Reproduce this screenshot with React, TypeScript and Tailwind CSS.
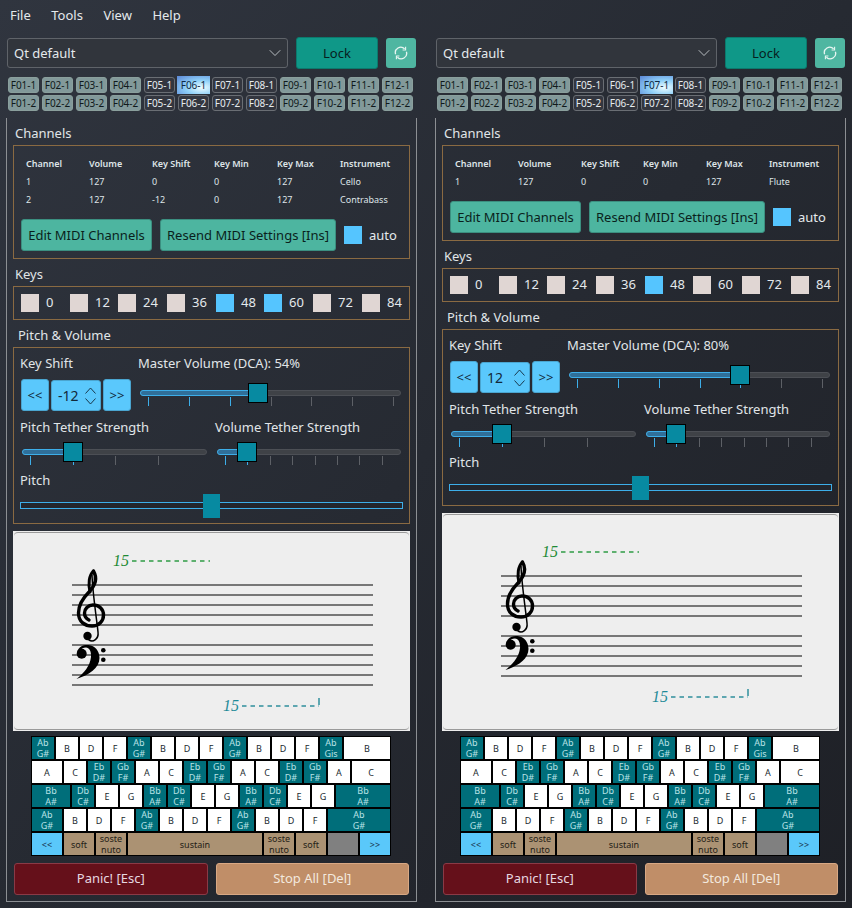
import { ChevronDown } from "lucide-react";

type Tick = { x: number; on: boolean };

type PaneProps = {
  selectedFn: number;
  channels: string[][];
  keysOn: number[];
  shift: string;
  volume: number;
  masterHandle: number;
  pitchHandle: number;
};

const ACCENT_KEY = "bg-[#006e7a] text-[#b8e2e6]";
const WHITE_KEY = "bg-white text-[#1b2a30]";
const PEDAL_KEY = "bg-[#ab9273] text-[#241d16]";
const BLUE_KEY = "bg-[#5ac8fa] text-[#17324a]";

const ab = "Ab\nG#";
const bb = "Bb\nA#";
const db = "Db\nC#";
const eb = "Eb\nD#";
const gb = "Gb\nF#";

// [label, width, colour]
type KeyDef = [string, string, string];

const k = (label: string, width = "w-[24px]"): KeyDef => [
  label,
  width,
  label.includes("\n") ? ACCENT_KEY : WHITE_KEY,
];

const KEY_ROWS: KeyDef[][] = [
  [
    k(ab), k("B"), k("D"), k("F"), k(ab), k("B"), k("D"), k("F"), k(ab), k("B"), k("D"), k("F"),
    k("Ab\nGis"), k("B", "w-[48px]"),
  ],
  [
    k("A", "w-[32px]"), k("C"), k(eb), k(gb), k("A"), k("C"), k(eb), k(gb), k("A"), k("C"), k(eb), k(gb),
    k("A"), k("C", "w-[40px]"),
  ],
  [
    k(bb, "w-[40px]"), k(db), k("E"), k("G"), k(bb), k(db), k("E"), k("G"), k(bb), k(db), k("E"), k("G"),
    k(bb, "w-[56px]"),
  ],
  [
    k(ab, "w-[32px]"), k("B"), k("D"), k("F"), k(ab), k("B"), k("D"), k("F"), k(ab), k("B"), k("D"), k("F"),
    k(ab, "w-[64px]"),
  ],
  [
    ["<<", "w-[32px]", BLUE_KEY],
    ["soft", "w-[32px]", PEDAL_KEY],
    ["soste\nnuto", "w-[32px]", PEDAL_KEY],
    ["sustain", "w-[136px]", PEDAL_KEY],
    ["soste\nnuto", "w-[32px]", PEDAL_KEY],
    ["soft", "w-[32px]", PEDAL_KEY],
    ["", "w-[32px]", "bg-[#808080]"],
    [">>", "w-[32px]", BLUE_KEY],
  ],
];

const COLUMNS = ["Channel", "Volume", "Key Shift", "Key Min", "Key Max", "Instrument"];
const OCTAVES = ["0", "12", "24", "36", "48", "60", "72", "84"];
const FN_COLS = ["01", "02", "03", "04", "05", "06", "07", "08", "09", "10", "11", "12"];

const SyncIcon = () => (
  <svg width="14" height="14" viewBox="0 0 14 14" fill="none" stroke="#e8f6f2" strokeWidth="1.3">
    <path d="M1.6 8.2A5.4 5.4 0 0 1 10.6 2.8" />
    <path d="M12.4 5.8A5.4 5.4 0 0 1 3.4 11.2" />
    <path d="M11.6 0.8V4H8.6" strokeWidth="1.1" />
    <path d="M2.4 13.2V10H5.4" strokeWidth="1.1" />
  </svg>
);

const SpinArrows = () => (
  <svg width="11" height="18" viewBox="0 0 11 18" fill="none" stroke="#12293a" strokeWidth="0.9">
    <path d="M0.500 6.500L5.500 1L10.500 6.500" />
    <path d="M0.500 11.500L5.500 17L10.500 11.500" />
  </svg>
);

const FnButton = ({ label, selected, dark }: { label: string; selected: boolean; dark: boolean }) => {
  if (selected) {
    return (
      <div className="w-[33px] h-[18px] -mx-px -my-px flex items-center justify-center text-[10px] text-[#102a44] bg-[radial-gradient(ellipse_at_75%_65%,#effdff_0%,#8fd0f8_45%,#5a86d6_100%)]">
        {label}
      </div>
    );
  }
  return (
    <div
      className={
        dark
          ? "w-[31px] h-[16px] rounded-[3px] border border-[#6a6e74] bg-[#33363f] flex items-center justify-center text-[10px] text-[#e6ebee]"
          : "w-[31px] h-[16px] rounded-[3px] border border-[#8a9f9c] bg-[#82999a] flex items-center justify-center text-[10px] text-[#10191b]"
      }
    >
      {label}
    </div>
  );
};

const FnRows = ({ selected }: { selected: number }) => (
  <div className="ml-[2px] mt-[8px] flex flex-col gap-[2px]">
    {["1", "2"].map((row) => (
      <div key={row} className="flex gap-[3px]">
        {FN_COLS.map((col, i) => (
          <FnButton
            key={col}
            label={`F${col}-${row}`}
            selected={row === "1" && i === selected}
            dark={i >= 4 && i <= 7}
          />
        ))}
      </div>
    ))}
  </div>
);

const ThemeRow = () => (
  <div className="ml-px flex items-center h-[32px]">
    <div className="w-[281px] h-[30px] rounded-[3px] border border-[#5f6369] bg-[#31353c] flex items-center justify-between pl-[6px] pr-[2px] text-[13px] text-[#e4e9ec]">
      <span className="pt-px">Qt default</span>
      <ChevronDown size={20} strokeWidth={0.9} />
    </div>
    <div className="ml-[8px] w-[82px] h-[32px] pt-px rounded-[3px] border border-[#0b7a6d] bg-[#0f9888] flex items-center justify-center text-[13px] text-[#07201d]">
      Lock
    </div>
    <div className="ml-[8px] w-[30px] h-[30px] rounded-[3px] bg-[#4fb6a1] flex items-center justify-center">
      <SyncIcon />
    </div>
  </div>
);

const Channels = ({ rows }: { rows: string[][] }) => (
  <div className="border border-[#8a6a42] pl-[7px] pr-[7px] pt-[9px] pb-[7px]">
    <div className="grid grid-cols-[63px_63px_62px_63px_63px_auto] pl-[5px] text-[9px] text-[#dfe5e8]">
      {COLUMNS.map((c) => (
        <div key={c} className="h-[18px] flex items-center font-semibold">
          {c}
        </div>
      ))}
      {rows.flat().map((c, i) => (
        <div key={i} className="h-[18px] flex items-center">
          {c}
        </div>
      ))}
    </div>
    <div className="mt-[10px] flex items-center text-[13px]">
      <div className="w-[131px] h-[32px] pt-px rounded-[3px] border border-[#3b8f80] bg-[#4db5a0] flex items-center justify-center text-[#0a1f1c]">
        Edit MIDI Channels
      </div>
      <div className="ml-[8px] w-[176px] h-[32px] pt-px rounded-[3px] border border-[#3b8f80] bg-[#4db5a0] flex items-center justify-center text-[#0a1f1c]">
        Resend MIDI Settings [Ins]
      </div>
      <div className="ml-[8px] size-[18px] bg-[#55c5ff]" />
      <span className="ml-[7px] pt-px text-[#e4e9ec]">auto</span>
    </div>
  </div>
);

const Keys = ({ on }: { on: number[] }) => (
  <div className="border border-[#8a6a42] h-[34px] pl-[7px] grid grid-cols-[49px_48px_49px_49px_48px_49px_49px_auto] items-center text-[13px] text-[#e4e9ec]">
    {OCTAVES.map((o, i) => (
      <div key={o} className="flex items-center gap-[7px]">
        <div className={on.includes(i) ? "size-[18px] bg-[#55c5ff]" : "size-[18px] bg-[#e0d6d3]"} />
        <span>{o}</span>
      </div>
    ))}
  </div>
);

const Slider = ({
  width,
  handle,
  ticks,
}: {
  width: string;
  handle: number;
  ticks: number[];
}) => {
  const marks: Tick[] = ticks.map((x) => ({ x, on: x <= handle + 10 }));
  return (
    <div className={`relative h-[23px] ${width}`}>
      <div className="absolute inset-x-0 top-[7px] h-[6px] rounded-full bg-[#3f4247] border border-[#4c4f55]" />
      <div
        className="absolute left-0 top-[7px] h-[6px] rounded-l-full bg-[#306f99] border border-[#3daee9]"
        style={{ width: handle + 2 }}
      />
      {marks.map((t) => (
        <div
          key={t.x}
          className={t.on ? "absolute top-[14px] h-[9px] w-px bg-[#3daee9]" : "absolute top-[14px] h-[9px] w-px bg-[#5d6066]"}
          style={{ left: t.x }}
        />
      ))}
      <div
        className="absolute top-0 size-[20px] bg-[#078aa1] border border-black"
        style={{ left: handle }}
      />
    </div>
  );
};

const SpinButton = ({ label }: { label: string }) => (
  <div className="w-[28px] h-[32px] rounded-[3px] border border-[#4aa5d0] bg-[#5ac8fc] flex items-center justify-center text-[13px] text-[#12293a]">
    {label}
  </div>
);

const PitchVolume = ({
  shift,
  volume,
  masterHandle,
  pitchHandle,
}: {
  shift: string;
  volume: number;
  masterHandle: number;
  pitchHandle: number;
}) => (
  <div className="border border-[#8a6a42] h-[177px] pl-[6px] pt-[6px] text-[13px] leading-[19px] text-[#e0e5e8]">
    <div className="flex">
      <div className="w-[118px]">
        <div>Key Shift</div>
        <div className="mt-[6px] ml-px flex gap-[2px]">
          <SpinButton label="<<" />
          <div className="w-[50px] h-[31px] mt-px rounded-[3px] border border-[#4aa5d0] bg-[#5ac8fc] flex items-center justify-between pl-[6px] pr-[4px] text-sm text-[#12293a]">
            <span>{shift}</span>
            <SpinArrows />
          </div>
          <SpinButton label=">>" />
        </div>
      </div>
      <div>
        <div>Master Volume (DCA): {volume}%</div>
        <div className="mt-[10px] ml-[2px]">
          <Slider width="w-[261px]" handle={masterHandle} ticks={[8, 49, 90, 131, 171, 212, 253]} />
        </div>
      </div>
    </div>
    <div className="mt-[7px] flex">
      <div className="w-[195px]">
        <div>Pitch Tether Strength</div>
        <div className="mt-[5px] ml-[2px]">
          <Slider width="w-[185px]" handle={41} ticks={[8, 51, 93, 136]} />
        </div>
      </div>
      <div>
        <div>Volume Tether Strength</div>
        <div className="mt-[5px] ml-[2px]">
          <Slider width="w-[184px]" handle={20} ticks={[8, 30, 53, 75, 98, 120, 142, 165]} />
        </div>
      </div>
    </div>
    <div className="mt-[6px]">Pitch</div>
    <div className="relative mt-[4px] h-[24px] w-[383px]">
      <div className="absolute inset-x-0 top-[8px] h-[7px] border border-[#3daee9] bg-[#23262d]" />
      <div className="absolute top-0 w-[17px] h-[24px] bg-[#078aa1]" style={{ left: pitchHandle }} />
    </div>
  </div>
);

const STAFF_LINES = [53, 63, 73, 83, 93, 113, 123, 133, 143, 153];

const Notation = () => (
  <div className="mt-[7px] flex-1 relative bg-[#eeeeee] flex items-center">
    <div className="absolute inset-px rounded-[4px] border-y border-[#9a9a9a]" />
    <svg width="397" height="199" viewBox="0 0 397 199" className="relative">
      {STAFF_LINES.map((y) => (
        <line key={y} x1="59" x2="360" y1={y} y2={y} stroke="#777777" strokeWidth="2" />
      ))}
      {/* treble clef */}
      <g fill="none" stroke="#000000" strokeLinecap="round">
        <path d="M79 43C79.500 60 84 90 85 100C86 107 80 110.500 76 108" strokeWidth="1.500" />
        <path
          d="M80.500 39C84 45 83.500 52 76 60C70 66 65.500 72 65.500 81C65.500 90 72 94 79 94C86 94 90.500 89 90.500 83C90.500 77 86 73 80 73C75 73 71.500 77 71.500 81C71.500 85 74 87 76 88"
          strokeWidth="3.400"
        />
        <path d="M80.500 39C76 43 75 52 77 60" strokeWidth="3" />
      </g>
      <circle cx="74.500" cy="104" r="4.200" fill="#000000" />
      {/* bass clef */}
      <path
        d="M64 120C66 114 71 112.500 75.500 113C82 113.500 86.500 119 86.500 126C86.500 136 76 143 63.500 147C71 141 77 134 78 125C78.500 119 76 115.500 73 115.500C70 115.500 68 117 67 119Z"
        fill="#000000"
      />
      <circle cx="68.700" cy="121.700" r="5" fill="#000000" />
      <circle cx="90.300" cy="118.300" r="2.300" fill="#000000" />
      <circle cx="90.300" cy="127.700" r="2.300" fill="#000000" />
      {/* octave marks */}
      <text x="100" y="34" fontFamily="Liberation Serif" fontStyle="italic" fontSize="16" fill="#1f8a35">
        15
      </text>
      <line x1="119" x2="197" y1="29" y2="29" stroke="#2f9c45" strokeWidth="1.500" strokeDasharray="4.500 4" />
      <text x="210" y="179" fontFamily="Liberation Serif" fontStyle="italic" fontSize="16" fill="#1f8a98">
        15
      </text>
      <line x1="229" x2="306" y1="174" y2="174" stroke="#2f8f9c" strokeWidth="1.500" strokeDasharray="4.500 4" />
      <line x1="306" x2="306" y1="166" y2="173" stroke="#2f8f9c" strokeWidth="1.500" />
    </svg>
  </div>
);

const Keyboard = () => (
  <div className="mt-[5px] ml-[18px] flex flex-col">
    {KEY_ROWS.map((row, r) => (
      <div key={r} className="flex">
        {row.map(([label, width, colour], i) => (
          <div
            key={i}
            className={`${width} ${colour} h-[24px] border border-black flex items-center justify-center text-center whitespace-pre-line text-[9px] leading-[11px]`}
          >
            {label}
          </div>
        ))}
      </div>
    ))}
  </div>
);

const Pane = ({ selectedFn, channels, keysOn, shift, volume, masterHandle, pitchHandle }: PaneProps) => (
  <div className="w-[411px] flex flex-col">
    <ThemeRow />
    <FnRows selected={selectedFn} />
    <div className="mt-[7px] flex-1 flex flex-col border-x border-b border-[#8c8f93] px-[6px] pt-[6px] pb-[6px]">
      <div className="ml-[2px] mb-[2px] text-[13px] leading-[19px] text-[#e0e5e8]">Channels</div>
      <Channels rows={channels} />
      <div className="ml-[2px] mt-[6px] mb-[2px] text-[13px] leading-[19px] text-[#e0e5e8]">Keys</div>
      <Keys on={keysOn} />
      <div className="ml-[5px] mt-[6px] mb-[2px] text-[13px] leading-[19px] text-[#e0e5e8]">Pitch &amp; Volume</div>
      <PitchVolume shift={shift} volume={volume} masterHandle={masterHandle} pitchHandle={pitchHandle} />
      <Notation />
      <Keyboard />
      <div className="mt-[7px] mx-px grid grid-cols-2 gap-[8px] text-[13px]">
        <div className="h-[32px] rounded-[3px] border border-[#8a3a46] bg-[#65101a] flex items-center justify-center text-[#e6d8e0]">
          Panic! [Esc]
        </div>
        <div className="h-[32px] rounded-[3px] border border-[#d8a884] bg-[#c08e68] flex items-center justify-center text-[#f3e9de]">
          Stop All [Del]
        </div>
      </div>
    </div>
  </div>
);

const App = () => {
  return (
    <div className="w-[852px] h-[908px] overflow-hidden flex flex-col font-['Noto_Sans',sans-serif] bg-linear-to-br from-[#30353f] via-[#262a32] to-[#1e2026]">
      <div className="h-[33px] shrink-0 flex items-center gap-[20.500px] pl-[10px] pb-[2px] text-[13px] text-[#e4e9ec]">
        <span>File</span>
        <span>Tools</span>
        <span>View</span>
        <span>Help</span>
      </div>
      <div className="flex-1 flex gap-[18px] pl-[6px] pt-[4px] pb-[6px]">
        <Pane
          selectedFn={5}
          channels={[
            ["1", "127", "0", "0", "127", "Cello"],
            ["2", "127", "-12", "0", "127", "Contrabass"],
          ]}
          keysOn={[4, 5]}
          shift="-12"
          volume={54}
          masterHandle={108}
          pitchHandle={183}
        />
        <Pane
          selectedFn={6}
          channels={[["1", "127", "0", "0", "127", "Flute"]]}
          keysOn={[4]}
          shift="12"
          volume={80}
          masterHandle={161}
          pitchHandle={183}
        />
      </div>
    </div>
  );
};

export default App;
